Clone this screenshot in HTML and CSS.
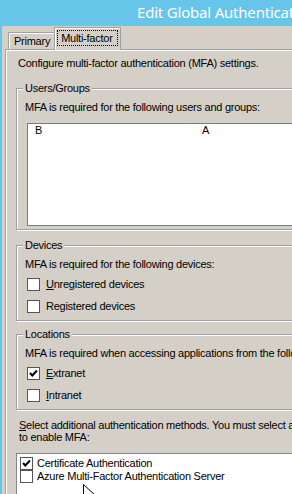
FILE: index.html
```html
<!DOCTYPE html>
<html lang="en">
<head>
    <meta charset="UTF-8">
    <title>Edit Global Authentication Policy</title>
    <link rel="stylesheet" href="styles.css">
</head>
<body>

<div class="titlebar">Edit Global Authentication Policy</div>

<div class="frame">
    <div class="tabs">
        <div class="tab">Primary</div>
        <div class="tab active"><span class="focus">Multi-factor</span></div>
    </div>

    <div class="panel">
        <p class="intro">Configure multi-factor authentication (MFA) settings.</p>

        <fieldset class="group users">
            <legend>Users/Groups</legend>
            <p class="note">MFA is required for the following users and groups:</p>
            <div class="listbox">
                <div class="entry"><span>B</span><span class="hidden-part"></span><span>A</span></div>
            </div>
        </fieldset>

        <fieldset class="group devices">
            <legend>Devices</legend>
            <p class="note">MFA is required for the following devices:</p>
            <div class="checks">
                <label class="check"><span class="box"></span><span><u>U</u>nregistered devices</span></label>
                <label class="check"><span class="box"></span><span>Registered devices</span></label>
            </div>
        </fieldset>

        <fieldset class="group locations">
            <legend>Locations</legend>
            <p class="note">MFA is required when accessing applications from the following locations:</p>
            <div class="checks">
                <label class="check"><span class="box checked"><svg width="11" height="11" viewBox="0 0 11 11"><path d="M2 5 L4.3 7.5 L9 2.5" fill="none" stroke="#000" stroke-width="2"/></svg></span><span><u>E</u>xtranet</span></label>
                <label class="check"><span class="box"></span><span><u>I</u>ntranet</span></label>
            </div>
        </fieldset>

        <p class="methods-note"><u>S</u>elect additional authentication methods. You must select at least one method<br>to enable MFA:</p>

        <div class="methods">
            <label class="item"><span class="box checked"><svg width="11" height="11" viewBox="0 0 11 11"><path d="M2 5 L4.3 7.5 L9 2.5" fill="none" stroke="#000" stroke-width="2"/></svg></span><span>Certificate Authentication</span></label>
            <label class="item"><span class="box"></span><span>Azure Multi-Factor Authentication Server</span></label>
        </div>
    </div>
</div>

<svg class="cursor" width="13" height="20" viewBox="0 0 13 20">
    <path d="M0.5 0.5 L0.5 16.5 L4.5 12.5 L7 18.5 L9.5 17.5 L7 11.5 L12.5 11.5 Z" fill="#fff" stroke="#000" stroke-width="1"/>
</svg>

</body>
</html>
```

FILE: styles.css
```css
body {
    margin: 0;
    width: 292px;
    height: 494px;
    overflow: hidden;
    position: relative;
    font-family: "Liberation Sans", Arial, sans-serif;
    font-size: 11px;
    letter-spacing: -0.25px;
    color: #000;
    background-color: #D4D0C8;
}

p {
    margin: 0;
    line-height: 13px;
    white-space: nowrap;
}

.titlebar {
    height: 26px;
    line-height: 24px;
    padding-left: 137px;
    background-color: #66C5E8; /* window chrome blue */
    color: #fff;
    font-family: "Noto Sans", sans-serif;
    font-size: 15px;
    letter-spacing: -0.2px;
    white-space: nowrap;
    overflow: hidden;
}

.frame {
    width: 500px;
    height: 468px;
    border-left: 2px solid #66C5E8;
}

/* tabs */
.tabs {
    display: flex;
    align-items: flex-end;
    height: 23px;
    padding-left: 6px;
}

.tab {
    height: 16px;
    padding: 0 4px 0 5px;
    line-height: 16px;
    border: 1px solid #A0A0A0;
    border-bottom: none;
    box-shadow: inset 1px 1px 0 #fff;
    background-color: #D4D0C8;
}

.tab.active {
    position: relative;
    z-index: 1;
    height: 20px;
    margin-bottom: -1px;
    margin-left: -1px;
    padding: 2px 2px 0 2px;
}

.focus {
    display: block;
    height: 14px;
    line-height: 14px;
    padding: 0 4px 0 3px;
    border: 1px dotted #000;
}

/* tab page */
.panel {
    height: 460px;
    margin-left: 3px;
    padding: 7px 0 0 10px;
    border-top: 1px solid #A0A0A0;
    border-left: 1px solid #A0A0A0;
    box-shadow: inset 1px 1px 0 #fff;
}

.intro {
    padding-left: 2px;
}

.group {
    margin: 9px 0 0 0;
    padding: 6px 0 3px 8px;
    border: 1px solid #A0A0A0;
    box-shadow: inset 1px 1px 0 #fff, 1px 1px 0 #fff;
}

.group legend {
    margin-left: -2px;
    padding: 0 2px;
    line-height: 13px;
    background-color: #D4D0C8;
}

.users {
    margin-top: 12px;
}

.devices,
.locations {
    padding-bottom: 7px;
}

.locations {
    margin-top: 7px;
}

.listbox {
    height: 101px;
    margin: 9px 0 0 2px;
    border: 1px solid #7A7A7A;
    background-color: #fff;
}

.entry {
    display: flex;
    padding-left: 7px;
    line-height: 13px;
}

.hidden-part {
    width: 160px;
}

.checks {
    display: flex;
    flex-direction: column;
    gap: 9px;
    margin: 7px 0 0 2px;
}

.check,
.item {
    display: flex;
    align-items: center;
    gap: 6px;
    height: 13px;
    line-height: 13px;
}

.box {
    box-sizing: border-box;
    display: flex;
    align-items: center;
    justify-content: center;
    width: 13px;
    height: 13px;
    border: 1px solid #555;
    background-color: #fff;
}

.methods-note {
    margin-top: 9px;
    padding-left: 3px;
    line-height: 12px;
}

.methods {
    height: 60px;
    margin-top: 10px;
    padding: 3px 0 0 3px;
    border-top: 1px solid #828790;
    border-left: 1px solid #828790;
    background-color: #fff;
}

.item {
    gap: 4px;
}

.cursor {
    position: absolute;
    left: 83px;
    top: 484px;
}
```
